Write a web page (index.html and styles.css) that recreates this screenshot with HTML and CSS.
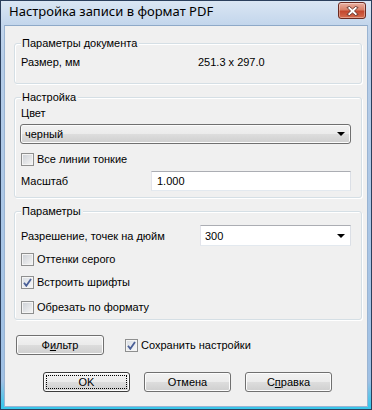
FILE: index.html
```html
<!DOCTYPE html>
<html lang="ru">
<head>
<meta charset="utf-8">
<title>Настройка записи в формат PDF</title>
<link rel="stylesheet" href="styles.css">
</head>
<body>
<div class="window">
  <div class="titlebar">
    <span class="title">Настройка записи в формат PDF</span>
    <div class="close">
      <svg width="13" height="10" viewBox="0 0 13 10"><path d="M1 1.5 L3.5 0.5 L6.5 3 L9.5 0.5 L12 1.5 L8.5 5 L12 8.5 L9.5 9.5 L6.5 7 L3.5 9.5 L1 8.5 L4.5 5 Z" fill="#fff" stroke="#5a2a22" stroke-width="0.9" stroke-linejoin="round"/></svg>
    </div>
  </div>
  <div class="client">
    <div class="group g1">
      <div class="legend">Параметры документа</div>
      <div class="size-row"><span class="size-label">Размер, мм</span><span class="size-val">251.3 x 297.0</span></div>
    </div>

    <div class="group g2">
      <div class="legend">Настройка</div>
      <div class="caption">Цвет</div>
      <div class="combo combo-btn"><span>черный</span><span class="arrow"></span></div>
      <div class="check c-thin"><span class="box"></span><span>Все линии тонкие</span></div>
      <div class="field-row scale-row"><span>Масштаб</span><div class="textbox scale-box">1.000</div></div>
    </div>

    <div class="group g3">
      <div class="legend">Параметры</div>
      <div class="field-row res-row"><span>Разрешение, точек на дюйм</span><div class="combo combo-white"><span>300</span><span class="arrow"></span></div></div>
      <div class="check c-gray"><span class="box"></span><span>Оттенки серого</span></div>
      <div class="check c-fonts"><span class="box checked"><svg width="9" height="9" viewBox="0 0 9 9"><path d="M1 4.8 L3.3 7.8 L8 1" fill="none" stroke="#4a5f97" stroke-width="1.8"/></svg></span><span>Встроить шрифты</span></div>
      <div class="check c-crop"><span class="box"></span><span>Обрезать по формату</span></div>
    </div>

    <div class="bottom-row">
      <div class="btn btn-filter">Ф<u>и</u>льтр</div>
      <div class="check c-save"><span class="box checked"><svg width="9" height="9" viewBox="0 0 9 9"><path d="M1 4.8 L3.3 7.8 L8 1" fill="none" stroke="#4a5f97" stroke-width="1.8"/></svg></span><span>Сохранить настройки</span></div>
    </div>

    <div class="buttons">
      <div class="btn btn-default"><span class="focus">OK</span></div>
      <div class="btn">Отмена</div>
      <div class="btn">С<u>п</u>равка</div>
    </div>
  </div>
</div>
</body>
</html>
```

FILE: styles.css
```css
* { box-sizing: border-box; }
html, body { margin: 0; padding: 0; }
body {
  width: 372px;
  height: 410px;
  overflow: hidden;
  font-family: "Liberation Sans", Arial, sans-serif;
  font-size: 11px;
  color: #000;
  background: #fff;
}
.window {
  width: 372px;
  height: 410px;
  border: 1px solid #2b3f5c;
  background: linear-gradient(to bottom, #dae6f3 0px, #c3d6ec 24px, #b6cde8 60px, #9fc0e4 380px, #3ac6ea 405px);
  display: flex;
  flex-direction: column;
  padding: 0 3px 2px 3px;
}
.titlebar {
  height: 24px;
  display: flex;
  align-items: center;
  justify-content: space-between;
  padding-left: 5px;
  padding-right: 2px;
  flex: none;
}
.title {
  font-family: "Noto Sans", "Open Sans", sans-serif;
  font-size: 13px;
  color: #000;
  margin-top: -5px;
}
.close {
  width: 28px;
  height: 17px;
  margin-top: -5px;
  border: 1px solid #6b2a20;
  border-radius: 3px;
  background: linear-gradient(to bottom, #eab1a2 0%, #d88068 45%, #c3472e 55%, #d66d4f 100%);
  box-shadow: inset 0 0 0 1px rgba(255,255,255,0.35);
  display: flex;
  align-items: center;
  justify-content: center;
}
.close svg { display: block; }
.client {
  flex: 1;
  background: #f0f0f0;
  border: 1px solid #9ab4d2;
  border-top-color: #8ea9c8;
  padding: 17px 5px 0 9px;
}
.group {
  border: 1px solid #d5dfe5;
  border-radius: 3px;
  box-shadow: inset 1px 1px 0 #fff, 1px 1px 0 #fff;
  width: 348px;
}
.legend {
  margin: -8px 0 0 6px;
  padding: 0 2px 0 1px;
  line-height: 14px;
  height: 14px;
  background: #f0f0f0;
  width: fit-content;
}
.g1 { height: 41px; }
.size-row {
  margin-top: 5px;
  height: 14px;
  line-height: 14px;
  display: flex;
  padding-left: 6px;
}
.size-label { width: 177px; }

.g2 { margin-top: 13px; height: 101px; padding: 0 10px 0 5px; }
.g2 .legend { margin-left: 1px; }
.caption { margin-top: 2px; height: 14px; line-height: 14px; padding-left: 1px; }

.combo {
  position: relative;
  display: flex;
  align-items: center;
  padding-left: 4px;
}
.combo-btn {
  margin-top: 4px;
  height: 20px;
  border: 1px solid #707070;
  border-radius: 3px;
  background: linear-gradient(to bottom, #f2f2f2 0%, #ebebeb 50%, #dddddd 50%, #cfcfcf 100%);
  box-shadow: inset 0 0 0 1px #fcfcfc;
}
.arrow {
  margin-left: auto;
  margin-right: 5px;
  width: 0;
  height: 0;
  border-left: 4px solid transparent;
  border-right: 4px solid transparent;
  border-top: 4px solid #000;
}
.check {
  display: flex;
  align-items: center;
  height: 14px;
  line-height: 14px;
}
.box {
  width: 13px;
  height: 13px;
  border: 1px solid #8e8f8f;
  background: linear-gradient(135deg, #cbcfd5 0%, #f6f6f6 100%);
  box-shadow: inset 0 0 0 1px #f4f4f4;
  margin-right: 3px;
  flex: none;
  display: flex;
  align-items: center;
  justify-content: center;
}
.box.checked { background: linear-gradient(135deg, #d8dde4 0%, #f8f8f8 100%); }
.box svg { display: block; }
.c-thin { margin-top: 8px; padding-left: 1px; }
.field-row {
  display: flex;
  align-items: center;
}
.scale-row { margin-top: 5px; height: 20px; padding-left: 1px; }
.textbox {
  margin-left: auto;
  height: 20px;
  border: 1px solid #abadb3;
  border-left-color: #e2e3ea;
  border-right-color: #dbdfe6;
  border-bottom-color: #e3e9ef;
  background: #fff;
  display: flex;
  align-items: center;
  padding-left: 5px;
}
.scale-box { width: 200px; }

.g3 { margin-top: 13px; height: 109px; padding: 0 10px 0 6px; }
.g3 .legend { margin-left: 0; }
.res-row { margin-top: 7px; height: 21px; }
.combo-white {
  margin-left: auto;
  width: 151px;
  height: 21px;
  border: 1px solid #abadb3;
  border-left-color: #e2e3ea;
  border-right-color: #dbdfe6;
  border-bottom-color: #e3e9ef;
  background: #fff;
}
.c-gray { margin-top: 6px; }
.c-fonts { margin-top: 9px; }
.c-crop { margin-top: 11px; }

.bottom-row {
  margin-top: 15px;
  display: flex;
  align-items: center;
  padding-left: 2px;
}
.btn {
  width: 87px;
  height: 20px;
  border: 1px solid #707070;
  border-radius: 3px;
  background: linear-gradient(to bottom, #f2f2f2 0%, #ebebeb 50%, #dddddd 50%, #cfcfcf 100%);
  box-shadow: inset 0 0 0 1px #fcfcfc;
  display: flex;
  align-items: center;
  justify-content: center;
  line-height: 14px;
}
.btn-filter { width: 88px; }
.c-save { margin-left: 21px; }
.buttons {
  margin-top: 17px;
  display: flex;
  gap: 14px;
  padding-left: 29px;
}
.btn-default {
  border-color: #3c3c3c;
  padding: 2px;
}
.btn-default .focus {
  width: 100%;
  height: 100%;
  border: 1px dotted #000;
  display: flex;
  align-items: center;
  justify-content: center;
}
u { text-decoration: underline; text-underline-offset: 1px; }
```
